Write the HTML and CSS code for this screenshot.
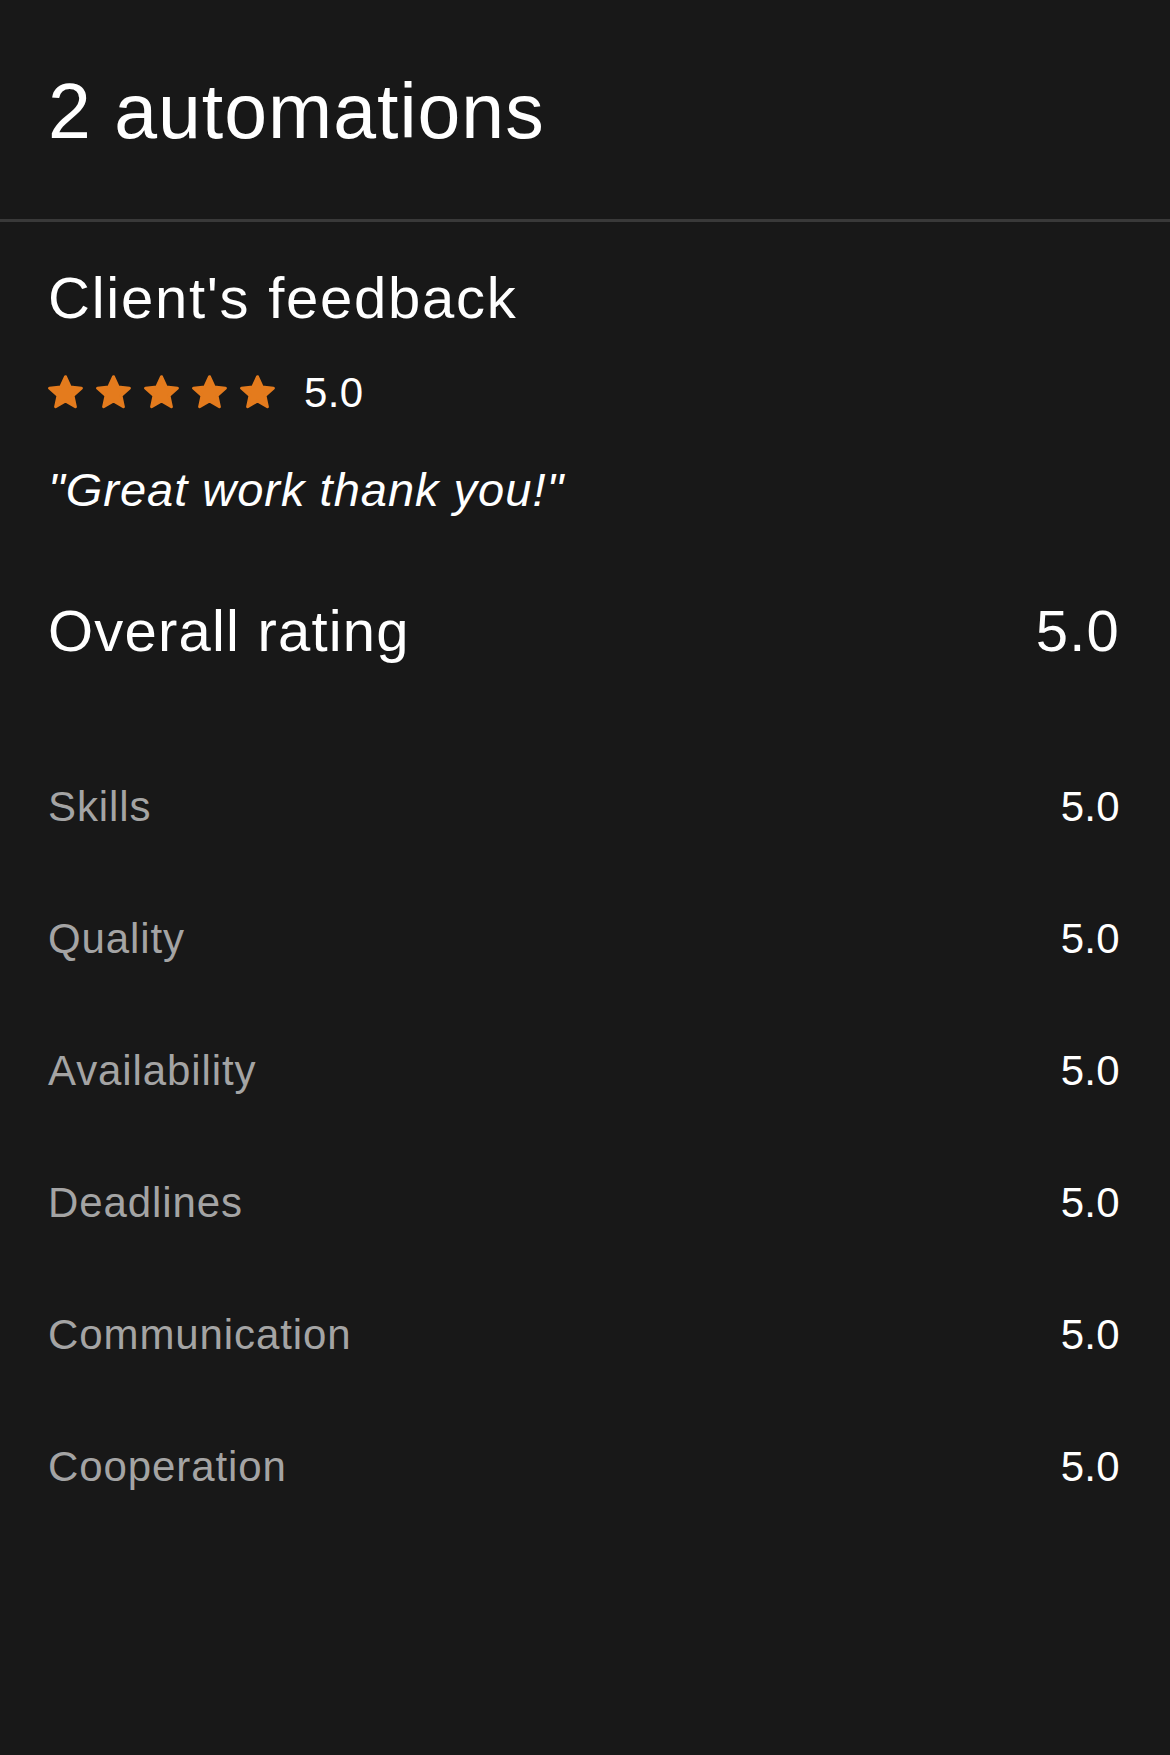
FILE: index.html
```html
<!DOCTYPE html>
<html lang="en">
<head>
<meta charset="utf-8">
<title>2 automations</title>
<link rel="stylesheet" href="styles.css">
</head>
<body>
<div class="screen">
  <header class="header">
    <h1 class="title">2 automations</h1>
  </header>
  <section class="feedback">
    <h2 class="section-title">Client's feedback</h2>
    <div class="stars-row">
      <div class="stars">
        <svg class="star" viewBox="2.5 2.3 19 19"><path d="M12 3.2l2.55 5.6 6.1.62-4.57 4.1 1.3 6.02L12 16.43l-5.38 3.11 1.3-6.02-4.57-4.1 6.1-.62z"/></svg>
        <svg class="star" viewBox="2.5 2.3 19 19"><path d="M12 3.2l2.55 5.6 6.1.62-4.57 4.1 1.3 6.02L12 16.43l-5.38 3.11 1.3-6.02-4.57-4.1 6.1-.62z"/></svg>
        <svg class="star" viewBox="2.5 2.3 19 19"><path d="M12 3.2l2.55 5.6 6.1.62-4.57 4.1 1.3 6.02L12 16.43l-5.38 3.11 1.3-6.02-4.57-4.1 6.1-.62z"/></svg>
        <svg class="star" viewBox="2.5 2.3 19 19"><path d="M12 3.2l2.55 5.6 6.1.62-4.57 4.1 1.3 6.02L12 16.43l-5.38 3.11 1.3-6.02-4.57-4.1 6.1-.62z"/></svg>
        <svg class="star" viewBox="2.5 2.3 19 19"><path d="M12 3.2l2.55 5.6 6.1.62-4.57 4.1 1.3 6.02L12 16.43l-5.38 3.11 1.3-6.02-4.57-4.1 6.1-.62z"/></svg>
      </div>
      <span class="stars-score">5.0</span>
    </div>
    <p class="quote">"Great work thank you!"</p>
    <div class="overall">
      <span class="overall-label">Overall rating</span>
      <span class="overall-value">5.0</span>
    </div>
    <ul class="ratings">
      <li class="rating-row"><span class="rating-label">Skills</span><span class="rating-value">5.0</span></li>
      <li class="rating-row"><span class="rating-label">Quality</span><span class="rating-value">5.0</span></li>
      <li class="rating-row"><span class="rating-label">Availability</span><span class="rating-value">5.0</span></li>
      <li class="rating-row"><span class="rating-label">Deadlines</span><span class="rating-value">5.0</span></li>
      <li class="rating-row"><span class="rating-label">Communication</span><span class="rating-value">5.0</span></li>
      <li class="rating-row"><span class="rating-label">Cooperation</span><span class="rating-value">5.0</span></li>
    </ul>
  </section>
</div>
</body>
</html>
```
FILE: styles.css
```css
html, body {
  margin: 0;
  padding: 0;
  background: #181818;
}

body {
  font-family: "Liberation Sans", Arial, sans-serif;
  color: #ffffff;
}

.screen {
  width: 1170px;
  min-height: 1755px;
  background: #181818;
}

.header {
  padding: 65px 48px 62px;
  border-bottom: 3px solid #393939;
}

.title {
  margin: 0;
  font-size: 77px;
  line-height: 92px;
  font-weight: 400;
  letter-spacing: 1px;
}

.feedback {
  padding: 41px 50px 0 48px;
}

.section-title {
  margin: 0;
  font-size: 58px;
  line-height: 70px;
  font-weight: 400;
  letter-spacing: 1.75px;
}

.stars-row {
  display: flex;
  align-items: center;
  height: 35px;
  margin-top: 42px;
}

.stars {
  display: flex;
  gap: 13px;
}

.star {
  width: 35px;
  height: 35px;
  display: block;
}

.star path {
  fill: #e47b1d;
  stroke: #e47b1d;
  stroke-width: 1.6;
  stroke-linejoin: round;
}

.stars-score {
  margin-left: 29px;
  font-size: 42px;
  line-height: 35px;
  letter-spacing: 0.3px;
}

.quote {
  margin: 52px 0 0;
  font-size: 47px;
  line-height: 56px;
  font-style: italic;
  letter-spacing: 1px;
}

.overall {
  display: flex;
  justify-content: space-between;
  margin-top: 78px;
  font-size: 58px;
  line-height: 70px;
  letter-spacing: 1.2px;
}

.ratings {
  list-style: none;
  margin: 75px 0 0;
  padding: 0;
}

.rating-row {
  display: flex;
  justify-content: space-between;
  font-size: 42px;
  line-height: 132px;
  height: 132px;
}

.rating-label {
  color: #a4a4a4;
  letter-spacing: 0.9px;
}

.rating-value {
  color: #ffffff;
  letter-spacing: 0.3px;
}
```
